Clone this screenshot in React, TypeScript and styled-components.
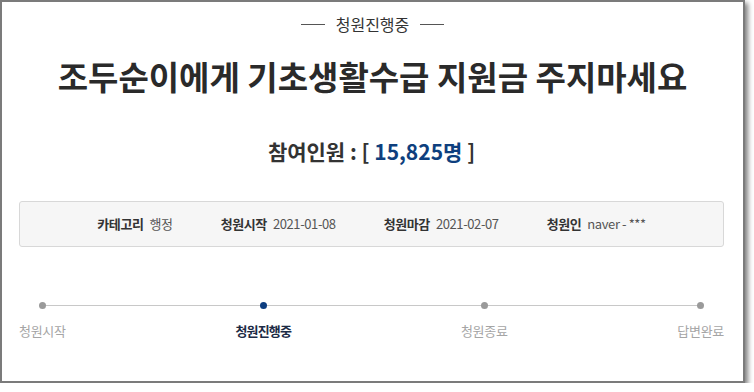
import React from "react";
import styled, { createGlobalStyle } from "styled-components";

const GlobalStyle = createGlobalStyle`
  html, body {
    margin: 0;
    padding: 0;
    background: #ffffff;
  }
  body {
    font-family: "Noto Sans CJK KR", "Noto Sans", sans-serif;
    color: #333;
  }
`;

const Frame = styled.div`
  box-sizing: border-box;
  width: 745px;
  height: 383px;
  border: 2px solid #7b7b7b;
  background: #fff;
  box-shadow: 3px 3px 5px rgba(0, 0, 0, 0.5);
  padding: 12px 19px 0 17px;
  display: flex;
  flex-direction: column;
  align-items: stretch;
`;

const Status = styled.div`
  display: flex;
  justify-content: center;
  align-items: center;
  gap: 11px;
  font-size: 16px;
  line-height: 20px;
  color: #333;
  padding-left: 2px;

  &::before,
  &::after {
    content: "";
    width: 24px;
    height: 1px;
    background: #555;
  }
`;

const Title = styled.h1`
  margin: 22px 0 0;
  text-align: center;
  font-size: 33px;
  line-height: 40px;
  font-weight: 700;
  color: #2a2a2a;
  padding-left: 2px;
`;

const Count = styled.div`
  margin-top: 41px;
  text-align: center;
  font-size: 21px;
  line-height: 28px;
  font-weight: 700;
  color: #333;
`;

const Number = styled.span`
  color: #0e3f7e;
`;

const InfoBox = styled.div`
  box-sizing: border-box;
  margin-top: 36px;
  height: 46px;
  border: 1px solid #d8d8d8;
  border-radius: 3px;
  background: #f6f6f6;
  display: flex;
  justify-content: center;
  align-items: center;
  gap: 48px;
`;

const InfoItem = styled.div`
  display: flex;
  align-items: center;
  gap: 6px;
  font-size: 13px;
  line-height: 18px;
  letter-spacing: -0.4px;
`;

const InfoLabel = styled.span`
  font-weight: 700;
  color: #333;
`;

const InfoValue = styled.span`
  color: #555;
`;

const Steps = styled.div`
  position: relative;
  margin-top: 55px;
  display: flex;
  justify-content: space-between;

  &::before {
    content: "";
    position: absolute;
    top: 3px;
    left: 24px;
    right: 23px;
    height: 1px;
    background: #c8c8c8;
  }
`;

type StepProps = {
  $active?: boolean;
};

const Step = styled.div`
  position: relative;
  display: flex;
  flex-direction: column;
  align-items: center;
  gap: 13px;
`;

const Dot = styled.span<StepProps>`
  width: 7px;
  height: 7px;
  border-radius: 50%;
  background: ${(p) => (p.$active ? "#0d3d80" : "#9a9a9a")};
`;

const StepLabel = styled.span<StepProps>`
  font-size: 13px;
  line-height: 18px;
  letter-spacing: ${(p) => (p.$active ? "-0.8px" : "-0.3px")};
  font-weight: ${(p) => (p.$active ? 700 : 400)};
  color: ${(p) => (p.$active ? "#1c2b45" : "#a5a5a5")};
`;

const info = [
  { label: "카테고리", value: "행정" },
  { label: "청원시작", value: "2021-01-08" },
  { label: "청원마감", value: "2021-02-07" },
  { label: "청원인", value: "naver - ***" },
];

const steps = ["청원시작", "청원진행중", "청원종료", "답변완료"];
const current = 1;

const App = () => {
  return (
    <>
      <GlobalStyle />
      <Frame>
        <Status>청원진행중</Status>
        <Title>조두순이에게 기초생활수급 지원금 주지마세요</Title>
        <Count>
          참여인원 : [ <Number>15,825명</Number> ]
        </Count>
        <InfoBox>
          {info.map((item) => (
            <InfoItem key={item.label}>
              <InfoLabel>{item.label}</InfoLabel>
              <InfoValue>{item.value}</InfoValue>
            </InfoItem>
          ))}
        </InfoBox>
        <Steps>
          {steps.map((s, i) => (
            <Step key={s}>
              <Dot $active={i === current} />
              <StepLabel $active={i === current}>{s}</StepLabel>
            </Step>
          ))}
        </Steps>
      </Frame>
    </>
  );
};

export default App;
